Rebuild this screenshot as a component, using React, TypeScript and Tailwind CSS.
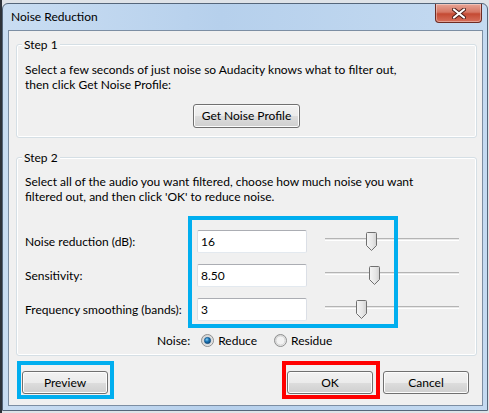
import React from 'react';

const WIN_FONT = "font-['Segoe_UI','Lato','Noto_Sans',sans-serif]";

function WinButton({ label, className = '' }: { label: string; className?: string }) {
  return (
    <button
      className={`h-[23px] w-[86px] rounded-[3px] border border-[#707070] bg-[linear-gradient(to_bottom,#f2f2f2_0%,#ebebeb_50%,#dddddd_50%,#cfcfcf_100%)] text-[12px] leading-none text-black shadow-[inset_0_0_0_1px_#fcfcfc] ${className}`}
    >
      {label}
    </button>
  );
}

function TextBox({ value }: { value: string }) {
  return (
    <input
      readOnly
      value={value}
      className="h-[23px] w-[110px] rounded-[2px] border border-[#abadb3] border-x-[#dbdfe6] border-b-[#e3e9ef] bg-white pl-[3px] text-[12px] text-black outline-none"
    />
  );
}

function Slider({ pos }: { pos: number }) {
  return (
    <div className="relative h-[23px] w-[134px]">
      {/* track */}
      <div className="absolute left-0 right-0 top-[8px] h-[3px] border-t border-t-[#b4b4b4] border-b border-b-[#ffffff] bg-[#e7e7e7]" />
      {/* thumb */}
      <svg className="absolute top-[2px]" style={{ left: pos }} width="11" height="19" viewBox="0 0 11 19">
        <defs>
          <linearGradient id="thumbFill" x1="0" y1="0" x2="1" y2="0">
            <stop offset="0" stopColor="#f6f6f6" />
            <stop offset="0.6" stopColor="#e6e6e6" />
            <stop offset="1" stopColor="#d2d2d2" />
          </linearGradient>
        </defs>
        <path
          d="M1.5 0.5 H9.5 Q10.5 0.5 10.5 1.5 V13.5 L5.5 18.5 L0.5 13.5 V1.5 Q0.5 0.5 1.5 0.5 Z"
          fill="url(#thumbFill)"
          stroke="#707070"
        />
      </svg>
    </div>
  );
}

function Radio({ checked, label }: { checked?: boolean; label: string }) {
  return (
    <label className="flex items-center gap-[4px]">
      <svg width="13" height="13" viewBox="0 0 13 13">
        <defs>
          <linearGradient id="radioRing" x1="0" y1="0" x2="1" y2="1">
            <stop offset="0" stopColor="#cbcbcb" />
            <stop offset="1" stopColor="#f4f4f4" />
          </linearGradient>
          <radialGradient id="radioDot" cx="0.4" cy="0.35" r="0.7">
            <stop offset="0" stopColor="#8ad0f5" />
            <stop offset="0.45" stopColor="#1c78b8" />
            <stop offset="1" stopColor="#0b3f6e" />
          </radialGradient>
        </defs>
        <circle cx="6.5" cy="6.5" r="6" fill="url(#radioRing)" stroke="#8e8f8f" />
        <circle cx="6.5" cy="6.5" r="4.5" fill="#f2f2f2" stroke="#d6d6d6" />
        {checked && <circle cx="6.5" cy="6.5" r="3.2" fill="url(#radioDot)" stroke="#174d7c" strokeWidth="0.6" />}
      </svg>
      <span>{label}</span>
    </label>
  );
}

function GroupBox({ title, className = '', children }: { title: string; className?: string; children: React.ReactNode }) {
  return (
    <div className={`relative ml-[7px] w-[461px] rounded-[3px] border border-[#d5dfe5] shadow-[inset_0_0_0_1px_#ffffff] ${className}`}>
      <span className="absolute -top-[8px] left-[5px] bg-[#f0f0f0] px-[2px] leading-[15px]">{title}</span>
      {children}
    </div>
  );
}

const rows = [
  { label: 'Noise reduction (dB):', value: '16', pos: 41 },
  { label: 'Sensitivity:', value: '8.50', pos: 44 },
  { label: 'Frequency smoothing (bands):', value: '3', pos: 31 },
];

export default function App() {
  return (
    <div className={`h-[413px] w-[489px] overflow-hidden border-l-2 border-[#2e333a] bg-[#dfe3e8] pt-[3px] ${WIN_FONT} text-[12px] text-black`}>
      <div className="flex h-[408px] w-[486px] flex-col rounded-t-[6px] border border-[#55667a] bg-[linear-gradient(to_right,#c9ddf2,#b6d0ec_45%,#c4daf1)]">
        {/* Title bar */}
        <div className="flex h-[26px] items-start justify-between">
          <span className="ml-[8px] mt-[5px] leading-[15px]">Noise Reduction</span>
          <div className="mr-[5px] flex h-[19px] w-[47px] items-center justify-center rounded-b-[4px] border border-t-0 border-[#6e2b23] bg-[linear-gradient(to_bottom,#e8a496_0%,#d67764_45%,#c44a33_55%,#d7705c_100%)] shadow-[inset_0_0_0_1px_rgba(255,255,255,0.35)]">
            <svg width="14" height="11" viewBox="0 0 14 11">
              <path d="M2 1.5 L12 9.5 M12 1.5 L2 9.5" stroke="#4a1d18" strokeWidth="4" strokeLinecap="round" />
              <path d="M2 1.5 L12 9.5 M12 1.5 L2 9.5" stroke="#ffffff" strokeWidth="2.2" strokeLinecap="round" />
            </svg>
          </div>
        </div>

        {/* Client area */}
        <div className="ml-[5px] h-[376px] w-[475px] border border-[#7c8ea3] bg-[#f0f0f0]">
          <div className="relative flex h-full flex-col pt-[13px]">
            <GroupBox title="Step 1" className="h-[94px]">
              <div className="flex flex-col items-center pt-[17px]">
                <p className="w-full pl-[8px] leading-[15px]">
                  Select a few seconds of just noise so Audacity knows what to filter out,
                  <br />
                  then click Get Noise Profile:
                </p>
                <button className="mt-[12px] h-[24px] w-[107px] rounded-[3px] border border-[#707070] bg-[linear-gradient(to_bottom,#f2f2f2_0%,#ebebeb_50%,#dddddd_50%,#cfcfcf_100%)] text-[12px] leading-none shadow-[inset_0_0_0_1px_#fcfcfc]">
                  Get Noise Profile
                </button>
              </div>
            </GroupBox>

            <GroupBox title="Step 2" className="mt-[19px] h-[199px]">
              <div className="relative flex flex-col pl-[8px] pt-[16px]">
                <p className="leading-[15px]">
                  Select all of the audio you want filtered, choose how much noise you want
                  <br />
                  filtered out, and then click 'OK' to reduce noise.
                </p>
                <div className="mt-[26px] flex flex-col gap-[11px]">
                  {rows.map((r) => (
                    <div key={r.label} className="flex items-center">
                      <span className="w-[172px]">{r.label}</span>
                      <TextBox value={r.value} />
                      <div className="ml-[18px]">
                        <Slider pos={r.pos} />
                      </div>
                    </div>
                  ))}
                </div>
                <div className="mt-[12px] flex items-center pl-[132px] leading-[15px]">
                  <span className="mr-[11px]">Noise:</span>
                  <Radio checked label="Reduce" />
                  <div className="ml-[17px]">
                    <Radio label="Residue" />
                  </div>
                </div>
                {/* highlight annotation around the inputs */}
                <div className="pointer-events-none absolute left-[171px] top-[58px] h-[112px] w-[210px] border-4 border-[#00aeef]" />
              </div>
            </GroupBox>

            {/* Buttons */}
            <div className="mt-[15px] flex items-center px-[13px]">
              <WinButton label="Preview" />
              <div className="flex-1" />
              <WinButton label="OK" />
              <WinButton label="Cancel" className="ml-[10px]" />
            </div>

            {/* highlight annotations around buttons */}
            <div className="pointer-events-none absolute left-[8px] top-[330px] h-[38px] w-[97px] border-4 border-[#00aeef]" />
            <div className="pointer-events-none absolute left-[273px] top-[330px] h-[38px] w-[98px] border-4 border-[#ff0000]" />
          </div>
        </div>
      </div>
    </div>
  );
}
